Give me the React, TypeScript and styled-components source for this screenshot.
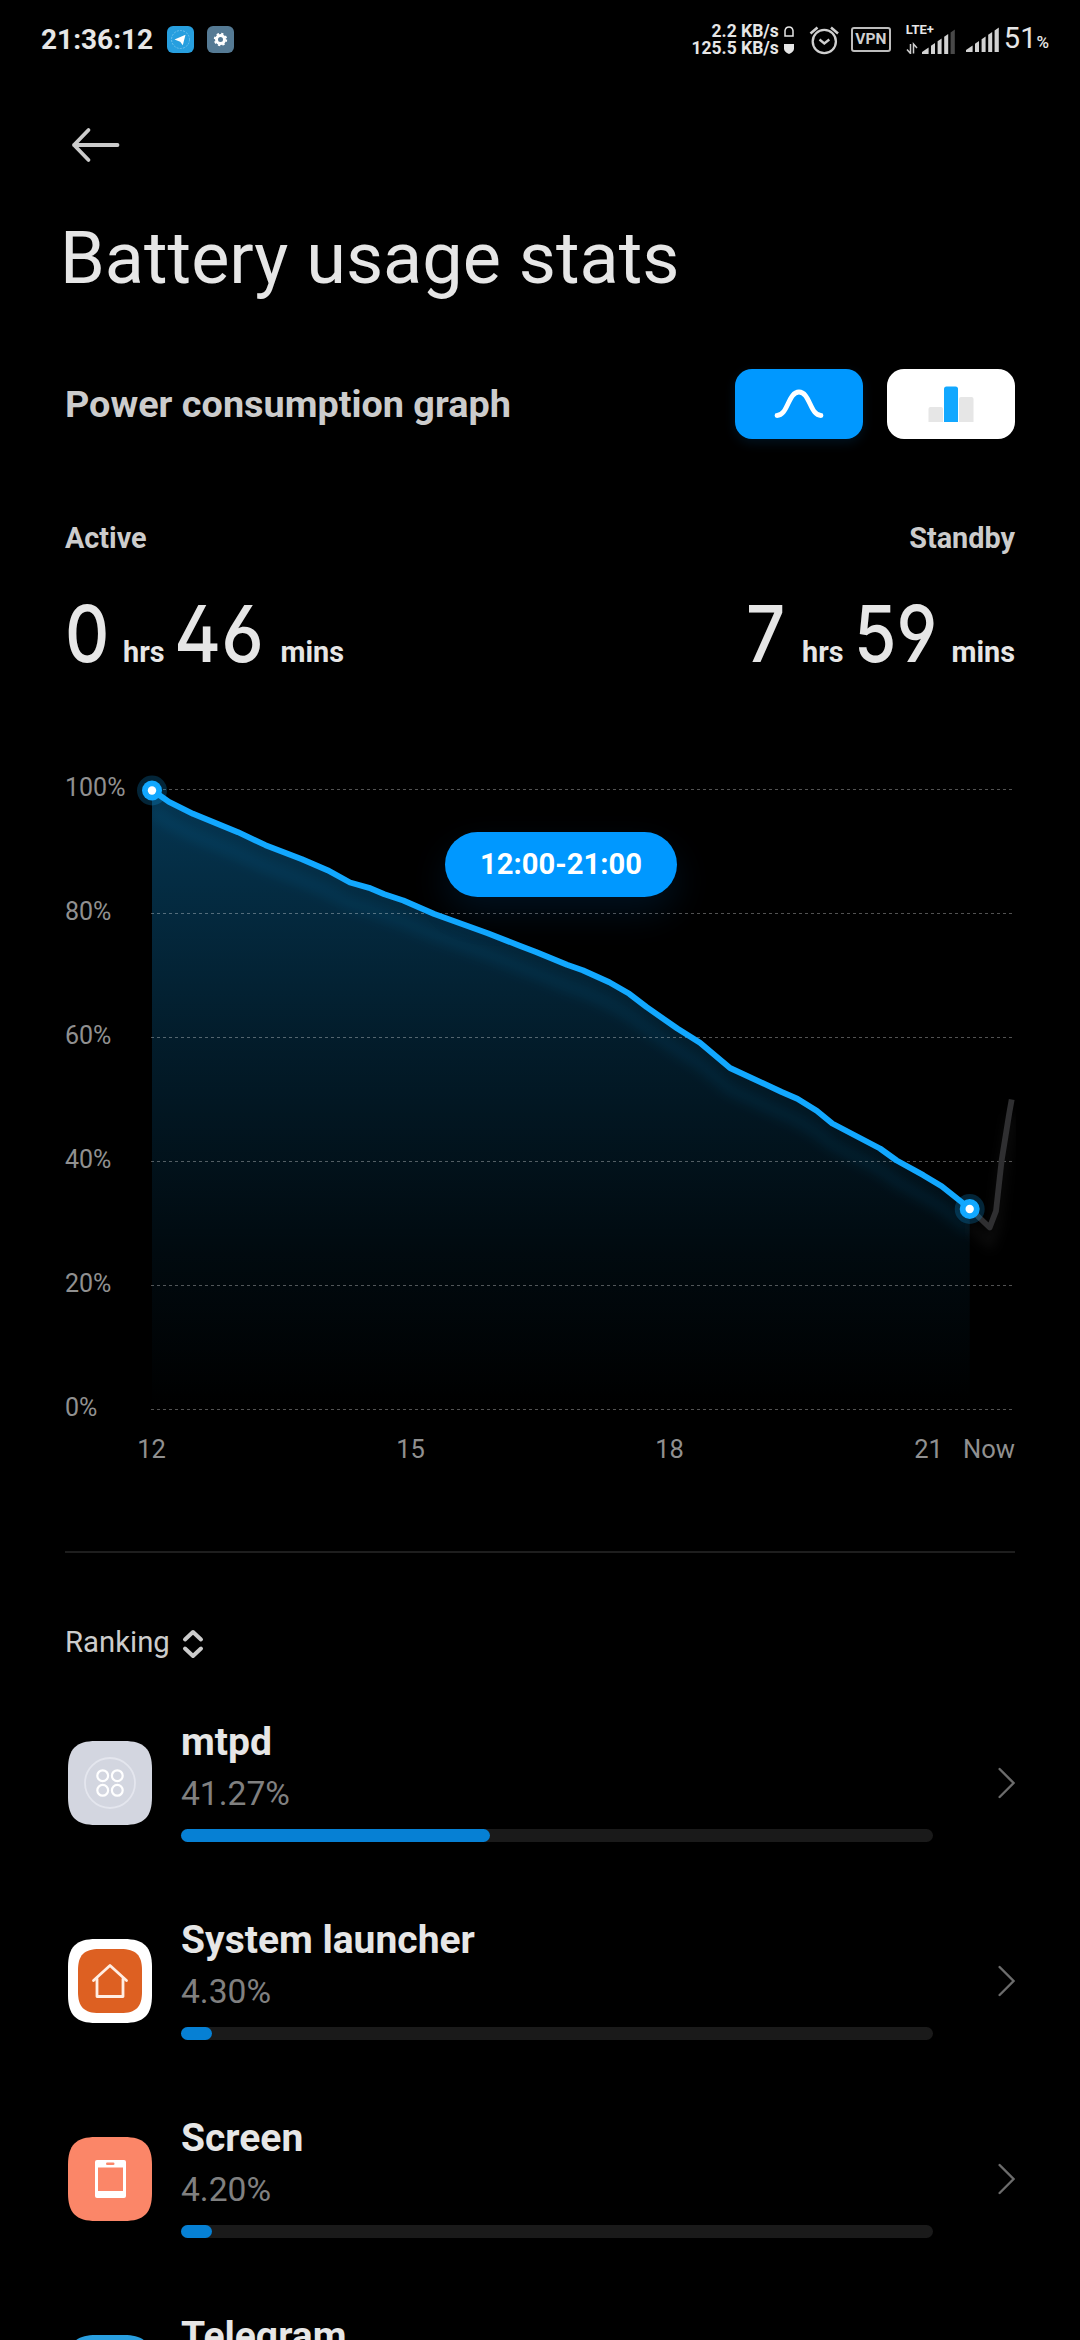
import React from "react";
import styled, { createGlobalStyle } from "styled-components";

const GlobalStyle = createGlobalStyle`
  html, body { margin: 0; background: #000; }
  body { height: 2340px; overflow: hidden; }
  * { box-sizing: border-box; }
`;

const Screen = styled.main`
  width: 1080px;
  height: 2340px;
  overflow: hidden;
  background: #000;
  color: #e6e6e6;
  font-family: Roboto, "Liberation Sans", sans-serif;
  display: flex;
  flex-direction: column;
  svg { display: block; flex: none; }
`;

/* ---------- status bar ---------- */

const StatusBar = styled.header`
  height: 79px;
  flex: none;
  padding: 0 31px 0 41px;
  display: flex;
  align-items: center;
`;

const Clock = styled.span`
  width: 126px;
  font-size: 28px;
  font-weight: 700;
  line-height: 34px;
`;

const NotificationIcons = styled.div`
  display: flex;
  gap: 13px;
  flex: 1;
`;

const NetSpeed = styled.div`
  display: grid;
  grid-template-columns: auto 10px;
  column-gap: 5px;
  align-items: center;
  justify-items: end;
  font-size: 17.5px;
  font-weight: 700;
  line-height: 17px;
  margin-right: 15px;
`;

const StatusSvg = styled.svg<{ $gap: number }>`
  margin-right: ${(p) => p.$gap}px;
`;

const VpnBadge = styled.span`
  width: 40px;
  height: 25px;
  border: 2px solid #bdbdbd;
  border-radius: 3px;
  margin-right: 15px;
  font-size: 15.5px;
  font-weight: 700;
  line-height: 21px;
  text-align: center;
  color: #cfcfcf;
`;

const LteSignal = styled.div`
  width: 49px;
  height: 28px;
  margin-right: 11px;
  display: flex;
  flex-direction: column;
`;

const LteLabel = styled.span`
  height: 3px;
  font-size: 13px;
  font-weight: 700;
  line-height: 8px;
  white-space: nowrap;
`;

const BatteryLevel = styled.span`
  display: flex;
  align-items: baseline;
  font-size: 29px;
  line-height: 34px;
`;

const PercentSign = styled.span`
  font-size: 17px;
  font-weight: 500;
`;

/* ---------- page header ---------- */

const BackButton = styled.button`
  border: 0;
  padding: 0;
  margin: 46px 0 0 70px;
  width: 52px;
  height: 40px;
  background: none;
`;

const Title = styled.h1`
  margin: 52px 0 0 60px;
  font-size: 72px;
  font-weight: 400;
  line-height: 84px;
  white-space: nowrap;
`;

const GraphHeader = styled.div`
  margin: 68px 65px 0;
  height: 70px;
  display: flex;
  align-items: center;
  gap: 24px;
`;

const GraphTitle = styled.h2`
  flex: 1;
  margin: 0;
  font-size: 37.8px;
  font-weight: 700;
  line-height: 44px;
  color: #ccc;
`;

const ModeButton = styled.button<{ $active?: boolean }>`
  width: 128px;
  height: 70px;
  padding: 0;
  border: 0;
  border-radius: 17px;
  display: flex;
  align-items: center;
  justify-content: center;
  background: ${(p) => (p.$active ? "#0098ff" : "#fff")};
  box-shadow: ${(p) => (p.$active ? "0 4px 12px rgba(0,152,255,.12)" : "none")};
`;

/* ---------- totals ---------- */

const Totals = styled.section`
  margin: 79px 65px 0;
  height: 271px;
  flex: none;
  display: flex;
  justify-content: space-between;
`;

const Total = styled.div<{ $end?: boolean }>`
  display: flex;
  flex-direction: column;
  align-items: ${(p) => (p.$end ? "flex-end" : "flex-start")};
`;

const TotalLabel = styled.span`
  font-size: 28.8px;
  font-weight: 700;
  line-height: 40px;
  color: #ccc;
`;

const Duration = styled.div`
  display: flex;
  align-items: baseline;
  margin-top: 35px;
  height: 90px;
`;

/* Condensed digits with open six and nine; the box keeps the condensed width. */
const DurationNumber = styled.span<{ $width: number; $scale?: number }>`
  width: ${(p) => p.$width}px;
  font-family: Inter, Roboto, sans-serif;
  font-feature-settings: "cv03", "cv04", "ss01";
  font-size: 79px;
  font-weight: 500;
  line-height: 80px;
  white-space: nowrap;
  transform: scaleX(${(p) => p.$scale ?? 0.87});
  transform-origin: 0 50%;
`;

const DurationUnit = styled.span`
  font-size: 28.8px;
  font-weight: 700;
  line-height: 40px;
  margin: 0 10px 0 15px;
  &:last-child { margin-right: 0; }
`;

/* ---------- chart ---------- */

const Chart = styled.section`
  margin: 0 65px;
  height: 764px;
  flex: none;
  display: grid;
  grid-template-columns: 86px 864px;
  grid-template-rows: 620px 1fr;
  border-bottom: 2px solid #1e1e1e;
`;

const YAxis = styled.div`
  margin-top: -62px;
  display: flex;
  flex-direction: column;
`;

const YLabel = styled.span`
  flex: none;
  height: 124px;
  line-height: 122px;
  font-size: 25px;
  color: #909090;
`;

const Plot = styled.div`
  position: relative;
  svg { overflow: visible; }
`;

const RangeBadge = styled.div`
  position: absolute;
  left: 294px;
  top: 43px;
  width: 232px;
  height: 65px;
  border-radius: 33px;
  background: #0098ff;
  box-shadow: 0 16px 36px rgba(0, 120, 220, 0.14);
  color: #fff;
  font-size: 29.2px;
  font-weight: 700;
  line-height: 65px;
  text-align: center;
`;

const XAxis = styled.div`
  grid-column: 2;
  padding-top: 24px;
  margin-left: -129px;
  display: grid;
  grid-template-columns: repeat(4, 259px);
  font-size: 25.5px;
  line-height: 32px;
  color: #909090;
  text-align: center;
`;

const LastHour = styled.span`
  display: grid;
  grid-template-columns: 259px 60px;
`;

const NowLabel = styled.span`
  margin-left: -95px;
  text-align: left;
`;

/* ---------- ranking ---------- */

const SortButton = styled.button`
  align-self: flex-start;
  height: 131px;
  flex: none;
  margin-left: 65px;
  padding: 49px 0 0;
  border: 0;
  background: none;
  color: #ccc;
  font: 400 29.3px/80px Roboto, sans-serif;
  display: flex;
  align-items: flex-start;
  gap: 12px;
  svg { margin-top: 26px; }
`;

const Row = styled.article`
  height: 198px;
  flex: none;
  padding: 0 65px 0 68px;
  display: flex;
  align-items: center;
`;

const RowInfo = styled.div`
  width: 752px;
  margin: -4px auto 0 29px;
  display: flex;
  flex-direction: column;
`;

const AppName = styled.h3`
  margin: 0 0 10px;
  font-size: 39px;
  font-weight: 700;
  line-height: 44px;
`;

const AppPercent = styled.span`
  height: 40px;
  font-size: 33.6px;
  line-height: 40px;
  color: #808080;
`;

const Track = styled.div`
  margin-top: 15px;
  height: 13px;
  border-radius: 7px;
  background: #1a1a1a;
`;

const Fill = styled.div`
  height: 13px;
  border-radius: 7px;
  background: #0680d4;
`;

const SQUIRCLE =
  "M42 0H56C76 0 84 8 84 28V56C84 76 76 84 56 84H28C8 84 0 76 0 56V28C0 8 8 0 28 0Z";

const MtpdIcon = () => (
  <svg width="84" height="84" viewBox="0 0 84 84" fill="none">
    <path d={SQUIRCLE} fill="#d3d6e0" />
    <circle cx="42" cy="42" r="25" stroke="#e4e6ee" strokeWidth="1.8" />
    <g stroke="#fff" strokeWidth="2.2">
      <circle cx="34.7" cy="34.7" r="5.4" />
      <circle cx="49.3" cy="34.7" r="5.4" />
      <circle cx="34.7" cy="49.3" r="5.4" />
      <circle cx="49.3" cy="49.3" r="5.4" />
    </g>
  </svg>
);

const LauncherIcon = () => (
  <svg width="84" height="84" viewBox="0 0 84 84" fill="none">
    <path d={SQUIRCLE} fill="#fff" />
    <path d={SQUIRCLE} transform="translate(10 10) scale(.762)" fill="#dd6022" />
    <g stroke="#ffeee4" strokeWidth="2.8" strokeLinecap="round" strokeLinejoin="round">
      <path d="M25.5 41.5 42 26.5 58.5 41.5" />
      <path d="M29 40V57.5H55V40" />
    </g>
  </svg>
);

const ScreenIcon = () => (
  <svg width="84" height="84" viewBox="0 0 84 84">
    <path d={SQUIRCLE} fill="#fb8668" />
    <rect x="27" y="23" width="31" height="38" rx="2" fill="#fff" />
    <rect x="30" y="30.5" width="25" height="23.5" fill="#fb8668" />
    <rect x="38" y="25.5" width="8.5" height="2.6" rx="1.3" fill="#fb8668" />
  </svg>
);

const TelegramIcon = () => (
  <svg width="84" height="84" viewBox="0 0 84 84">
    <path d={SQUIRCLE} fill="#2a9fe0" />
    <path d="M18 42 64 22 56 62 42 52 35 59V48Z" fill="#fff" />
  </svg>
);

const Chevron = () => (
  <svg width="17" height="32" viewBox="0 0 17 32" fill="none">
    <path d="M1.6 2 15.6 16 1.6 30" stroke="#6c6c6c" strokeWidth="2.4" strokeLinecap="round" />
  </svg>
);

const apps = [
  { name: "mtpd", percent: "41.27%", fill: 309, Icon: MtpdIcon },
  { name: "System launcher", percent: "4.30%", fill: 31, Icon: LauncherIcon },
  { name: "Screen", percent: "4.20%", fill: 31, Icon: ScreenIcon },
  { name: "Telegram", percent: "", fill: 0, Icon: TelegramIcon },
];

/* Plot coordinates: x starts at the axis, y = 0 at the 100% grid line. */
const LINE =
  "M1 1L18 12.8 42 24.8 87 43.2 114.5 56.2 151 70.2 176.5 81.2 199 93.5 218 98.8 233.4 105.2 252.3 111.5 283.3 125 336.7 144.2 368 156.5 385 163 416 175.8 431.7 181.2 458.3 193.2 478.3 204.8 495.7 218.2 526.3 239.5 549 253.8 579 279 630.7 303 646.3 309.8 665.7 321.8 681.3 334.5 729 359.5 745.7 371.5 772.3 386.2 790.7 397.2 818.7 419.5";

const GREY_LINE =
  "M818.7 419.5 838.7 438.5 845 422 850.7 371 858.3 324 860.7 310.5";

const Marker = ({ x, y }: { x: number; y: number }) => (
  <g>
    <circle cx={x} cy={y} r="15" fill="#0fa8ff" fillOpacity=".22" />
    <circle cx={x} cy={y} r="10" fill="#12a8ff" />
    <circle cx={x} cy={y} r="4.2" fill="#fff" />
  </g>
);

const PlotSvg = () => (
  <svg width="864" height="620" viewBox="0 0 864 620" fill="none">
    <defs>
      <linearGradient id="area" x1="0" y1="0" x2="0" y2="620" gradientUnits="userSpaceOnUse">
        <stop offset="0" stopColor="#0fa8ff" stopOpacity=".32" />
        <stop offset=".4" stopColor="#0fa8ff" stopOpacity=".17" />
        <stop offset=".75" stopColor="#0fa8ff" stopOpacity=".06" />
        <stop offset="1" stopColor="#0fa8ff" stopOpacity="0" />
      </linearGradient>
      <filter id="soft" x="-10%" y="-10%" width="120%" height="130%">
        <feGaussianBlur stdDeviation="6" />
      </filter>
      <clipPath id="under">
        <path d={`${LINE}V620H1Z`} />
      </clipPath>
    </defs>
    <path d={`${LINE}V620H1Z`} fill="url(#area)" />
    <g clipPath="url(#under)">
      <path d={LINE} transform="translate(0 21)" stroke="#0fa8ff" strokeOpacity=".09" strokeWidth="11" filter="url(#soft)" />
    </g>
    {[0, 124, 248, 372, 496, 620].map((y) => (
      <path key={y} d={`M0 ${y + 0.5}H861`} stroke="#fff" strokeOpacity=".32" strokeDasharray="3 3" />
    ))}
    <path d={GREY_LINE} transform="translate(0 16)" stroke="#fff" strokeOpacity=".05" strokeWidth="8" filter="url(#soft)" />
    <path d={GREY_LINE} stroke="#2f2f31" strokeWidth="5.8" strokeLinejoin="round" />
    <path d={LINE} stroke="#12a8ff" strokeWidth="5.9" strokeLinejoin="round" />
    <Marker x={1} y={1.5} />
    <Marker x={818.7} y={420} />
  </svg>
);

const SignalBars = ({ dimLast }: { dimLast?: boolean }) => (
  <g fill="#d2d2d2">
    <path d="M0 25V23L6.6 18.5V25Z" />
    <path d="M9 25V16.8L13 14V25Z" />
    <path d="M15.6 25V12.3L19.6 9.5V25Z" />
    <path d="M22.2 25V7.8L26.2 5V25Z" />
    <path d="M28.6 25V3.4L32.8 .5V25Z" opacity={dimLast ? 0.35 : 1} />
  </g>
);

export default function App() {
  return (
    <Screen>
      <GlobalStyle />
      <StatusBar>
        <Clock>21:36:12</Clock>
        <NotificationIcons>
          <svg width="27" height="27" viewBox="0 0 27 27" fill="none">
            <rect width="27" height="27" rx="6" fill="#279fdf" />
            <circle cx="13.5" cy="13.5" r="9" stroke="#7cc6ee" strokeWidth=".8" strokeDasharray="2 1.2" />
            <path d="M7.5 13.5 18.5 8.7 15.8 19.2 13.2 15.8Z" fill="#fff" />
          </svg>
          <svg width="27" height="27" viewBox="0 0 27 27" fill="none">
            <rect width="27" height="27" rx="6" fill="#557a94" />
            <circle cx="13.5" cy="13.5" r="4" stroke="#fff" strokeWidth="3" />
            <circle cx="13.5" cy="13.5" r="5.8" stroke="#fff" strokeWidth="1.8" strokeDasharray="2.3 2.255" />
          </svg>
        </NotificationIcons>
        <NetSpeed>
          <span>2.2 KB/s</span>
          <svg width="10" height="11" viewBox="0 0 10 11" fill="none">
            <path d="M1 10V4.6Q1.6 1 5 1T9 4.6V10Z" stroke="#e6e6e6" strokeWidth="1.5" />
          </svg>
          <span>125.5 KB/s</span>
          <svg width="10" height="11" viewBox="0 0 10 11">
            <path d="M0 1H10V6Q9.6 9 5 11Q.4 9 0 6Z" fill="#e6e6e6" />
          </svg>
        </NetSpeed>
        <StatusSvg $gap={12} width="30" height="30" viewBox="0 0 30 30" fill="none" stroke="#cfcfcf">
          <circle cx="15.3" cy="16.5" r="11.6" strokeWidth="2.3" />
          <path d="M10.5 14.5 15.3 18.5 20.3 14.5" strokeWidth="2.3" />
          <path d="M1.5 8.5 8.5 2.5M22 2.5 29 8.5" strokeWidth="2.6" />
        </StatusSvg>
        <VpnBadge>VPN</VpnBadge>
        <LteSignal>
          <LteLabel>LTE+</LteLabel>
          <svg width="49" height="25" viewBox="0 0 49 25">
            <path d="M4.5 15V24.5L1 20.5M7.5 24.5V15L11 19" fill="none" stroke="#cfcfcf" strokeWidth="1.5" />
            <g transform="translate(16 0)">
              <SignalBars dimLast />
            </g>
          </svg>
        </LteSignal>
        <StatusSvg $gap={5} width="33" height="25" viewBox="0 0 33 25">
          <SignalBars />
        </StatusSvg>
        <BatteryLevel>
          51<PercentSign>%</PercentSign>
        </BatteryLevel>
      </StatusBar>

      <BackButton aria-label="Back">
        <svg width="52" height="40" viewBox="0 0 52 40" fill="none" stroke="#ccc" strokeWidth="3.8" strokeLinecap="round" strokeLinejoin="round">
          <path d="M18.5 5 4 20 18.5 35M4 20H47.5" />
        </svg>
      </BackButton>
      <Title>Battery usage stats</Title>

      <GraphHeader>
        <GraphTitle>Power consumption graph</GraphTitle>
        <ModeButton $active aria-label="Line graph">
          <svg width="50" height="32" viewBox="0 0 50 32" fill="none">
            <path d="M3 27.5C14 27.5 14 4 25 4S36 27.5 47 27.5" stroke="#fff" strokeWidth="4.8" strokeLinecap="round" />
          </svg>
        </ModeButton>
        <ModeButton aria-label="Bar graph">
          <svg width="46" height="36" viewBox="0 0 46 36">
            <path d="M.5 36V23Q.5 21 2.5 21H13Q15 21 15 23V36Z" fill="#e6e6e6" />
            <path d="M16 36V3Q16 .5 18.5 .5H27.5Q30 .5 30 3V36Z" fill="#12a8ff" />
            <path d="M31 36V13Q31 11 33 11H43.5Q45.5 11 45.5 13V36Z" fill="#e6e6e6" />
          </svg>
        </ModeButton>
      </GraphHeader>

      <Totals>
        <Total>
          <TotalLabel>Active</TotalLabel>
          <Duration>
            <DurationNumber $width={43}>0</DurationNumber>
            <DurationUnit>hrs</DurationUnit>
            <DurationNumber $width={91} $scale={0.91}>46</DurationNumber>
            <DurationUnit>mins</DurationUnit>
          </Duration>
        </Total>
        <Total $end>
          <TotalLabel>Standby</TotalLabel>
          <Duration>
            <DurationNumber $width={41}>7</DurationNumber>
            <DurationUnit>hrs</DurationUnit>
            <DurationNumber $width={83}>59</DurationNumber>
            <DurationUnit>mins</DurationUnit>
          </Duration>
        </Total>
      </Totals>

      <Chart>
        <YAxis>
          {["100%", "80%", "60%", "40%", "20%", "0%"].map((label) => (
            <YLabel key={label}>{label}</YLabel>
          ))}
        </YAxis>
        <Plot>
          <PlotSvg />
          <RangeBadge>12:00-21:00</RangeBadge>
        </Plot>
        <XAxis>
          <span>12</span>
          <span>15</span>
          <span>18</span>
          <LastHour>
            <span>21</span>
            <NowLabel>Now</NowLabel>
          </LastHour>
        </XAxis>
      </Chart>

      <SortButton>
        Ranking
        <svg width="22" height="32" viewBox="0 0 22 32" fill="none" stroke="#ccc" strokeWidth="4" strokeLinecap="round" strokeLinejoin="round">
          <path d="M3 11.5 11 4 19 11.5M3 20.5 11 28 19 20.5" />
        </svg>
      </SortButton>

      {apps.map(({ name, percent, fill, Icon }) => (
        <Row key={name}>
          <Icon />
          <RowInfo>
            <AppName>{name}</AppName>
            <AppPercent>{percent}</AppPercent>
            <Track>
              <Fill style={{ width: fill }} />
            </Track>
          </RowInfo>
          <Chevron />
        </Row>
      ))}
    </Screen>
  );
}
